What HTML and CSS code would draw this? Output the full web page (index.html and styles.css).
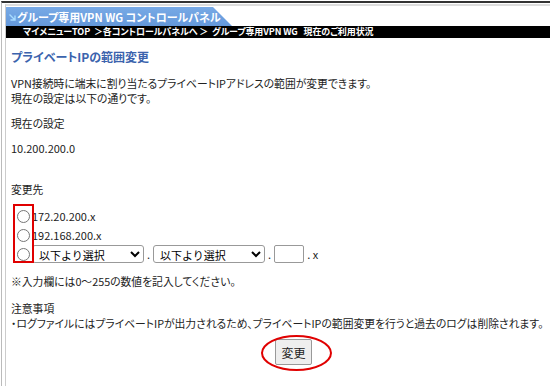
FILE: index.html
```html
<!DOCTYPE html>
<html lang="ja">
<head>
  <meta charset="UTF-8" />
  <title>グループ専用VPN WG コントロールパネル</title>
  <link rel="stylesheet" href="styles.css">
</head>
<body>
  <div class="frame">
    <div class="inner">
      <div class="tab">
        <svg class="tab-icon" width="7" height="7" viewBox="0 0 7 7">
          <path d="M0.5 0.5 L5.5 5.5 M6 1.5 L6 6 L1.5 6" stroke="#a8dcff" stroke-width="1.4" fill="none"/>
        </svg>
        グループ専用VPN WG コントロールパネル
      </div>
      <div class="crumbs">マイメニューTOP&nbsp; ＞各コントロールパネルへ ＞&nbsp; グループ専用VPN WG&nbsp;&nbsp; 現在のご利用状況</div>

      <div class="content">
        <h2 class="title">プライベートIPの範囲変更</h2>
        <p class="lead">VPN接続時に端末に割り当たるプライベートIPアドレスの範囲が変更できます。<br>現在の設定は以下の通りです。</p>
        <p class="label">現在の設定</p>
        <p class="value">10.200.200.0</p>
        <p class="label dest">変更先</p>

        <div class="choices">
          <label class="row"><input type="radio" name="ip">172.20.200.x</label>
          <label class="row"><input type="radio" name="ip">192.168.200.x</label>
          <div class="row">
            <input type="radio" name="ip">
            <select class="pick"><option>以下より選択</option></select>
            <span class="dot">.</span>
            <select class="pick"><option>以下より選択</option></select>
            <span class="dot">.</span>
            <input type="text" class="octet">
            <span class="dot">. x</span>
          </div>
          <div class="mark-box"></div>
        </div>

        <p class="note">※入力欄には0～255の数値を記入してください。</p>
        <p class="caution">注意事項<br>・ログファイルにはプライベートIPが出力されるため、プライベートIPの範囲変更を行うと過去のログは削除されます。</p>

        <div class="actions">
          <span class="btn-wrap">
            <button class="submit">変更</button>
            <span class="mark-ring"></span>
          </span>
        </div>
      </div>
    </div>
  </div>
</body>
</html>
```

FILE: styles.css
```css
body {
  margin: 0;
  font-family: "Noto Sans CJK JP", "Noto Sans", sans-serif;
  font-size: 10.8px;
  font-feature-settings: "palt";
  color: #222;
  background: #fff;
}

.frame {
  border-top: 2px solid #333;
  border-left: 1px solid #bbb;
  margin-top: 1px;
  margin-left: 1px;
  height: 385px;
  box-sizing: border-box;
}

.inner {
  border-top: 2px solid #ddd;
  border-left: 1px solid #ccc;
  margin-left: 3px;
  margin-top: 1px;
  height: 100%;
  box-sizing: border-box;
  padding-top: 1px;
}

.tab {
  display: flex;
  align-items: center;
  gap: 1px;
  width: 226px;
  height: 19px;
  padding-left: 3px;
  box-sizing: border-box;
  background: linear-gradient(to bottom, #78aae6, #6498da);
  clip-path: polygon(0 0, 207px 0, 100% 100%, 0 100%);
  color: #fff;
  font-size: 11px;
  font-weight: bold;
}

.tab-icon {
  margin-top: 2px;
}

.crumbs {
  background: #000;
  color: #fff;
  height: 12px;
  line-height: 12px;
  font-size: 9px;
  font-weight: bold;
  padding-left: 17px;
  letter-spacing: -0.1px;
  white-space: nowrap;
  overflow: hidden;
}

.content {
  padding-left: 5px;
}

.content p {
  margin: 0;
  line-height: 15px;
}

.title {
  margin: 12px 0 0;
  font-size: 12px;
  line-height: 14px;
  font-weight: bold;
  color: #3b63ad;
}

.lead {
  margin-top: 12px !important;
}

.label {
  margin-top: 10px !important;
}

.value {
  margin-top: 10px !important;
  font-size: 11px;
}

.dest {
  margin-top: 26px !important;
}

.choices {
  position: relative;
  margin-top: 10px;
}

.row {
  display: flex;
  align-items: center;
  height: 18px;
  font-size: 11px;
}

.row + .row {
  margin-top: 1px;
}

.row input[type="radio"] {
  margin: 0 2px 0 6px;
  width: 13px;
  height: 13px;
}

.pick {
  width: 112px;
  height: 18px;
  font-family: inherit;
  font-size: 11px;
  border: 1px solid #999;
  border-radius: 3px;
  background: #fff;
  padding: 0 2px;
}

.dot {
  margin: 0 3px;
}

.octet {
  width: 30px;
  height: 18px;
  box-sizing: border-box;
  border: 1px solid #999;
  border-radius: 2px;
  padding: 0 2px;
}

.mark-box {
  position: absolute;
  left: 2px;
  top: -3px;
  width: 21px;
  height: 59px;
  border: 2px solid #e00000;
  box-sizing: border-box;
}

.note {
  margin-top: 11px !important;
}

.caution {
  margin-top: 12px !important;
}

.actions {
  display: flex;
  justify-content: center;
  padding-left: 26px;
  margin-top: 8px;
}

.btn-wrap {
  position: relative;
}

.submit {
  width: 37px;
  height: 26px;
  font-family: inherit;
  font-size: 12px;
  background: #eee;
  border: 1px solid #999;
  border-radius: 2px;
  color: #222;
  padding: 0;
}

.mark-ring {
  position: absolute;
  left: -14px;
  top: -4px;
  width: 67px;
  height: 32px;
  border: 2px solid #e00000;
  border-radius: 50%;
}
```
